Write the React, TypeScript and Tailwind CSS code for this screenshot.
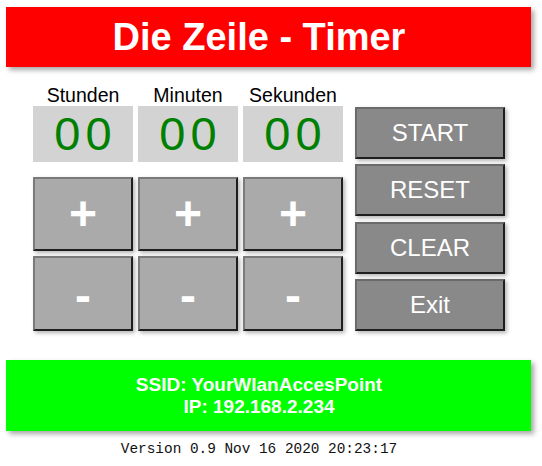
import React from 'react';

const units = ['Stunden', 'Minuten', 'Sekunden'];
const actions = ['START', 'RESET', 'CLEAR', 'Exit'];

export default function App() {
  return (
    <div className="w-[542px] h-[466px] bg-white pt-[7px] pl-[6px] pr-[11px] font-['Liberation_Sans',Arial,sans-serif]">
      {/* title bar */}
      <div className="h-[60px] bg-[#ff0000] flex items-center justify-center pr-[19px] shadow-[3px_3px_5px_rgba(0,0,0,0.35)]">
        <h1 className="text-white font-bold text-[38px] leading-none">Die Zeile - Timer</h1>
      </div>

      <div className="flex pl-[27px] mt-[17px]">
        {/* time + plus/minus */}
        <div className="grid grid-cols-[100px_100px_100px] gap-x-[5px]">
          {units.map((u) => (
            <div key={u} className="text-center text-black text-[19.5px] leading-[22px] h-[22px] whitespace-nowrap">
              {u}
            </div>
          ))}
          {units.map((u) => (
            <div
              key={u + '-v'}
              className="h-[56px] bg-[#d3d3d3] text-[#008000] text-[47px] leading-[56px] tracking-[5px] pl-[5px] text-center"
            >
              00
            </div>
          ))}
          {units.map((u) => (
            <button
              key={u + '-p'}
              className="mt-[15px] h-[74px] bg-[#aaaaaa] text-white font-bold text-[48px] leading-none border-2 border-t-[#7a7a7a] border-l-[#7a7a7a] border-r-[#1e1e1e] border-b-[#1e1e1e] shadow-[2px_2px_4px_rgba(0,0,0,0.3)]"
            >
              +
            </button>
          ))}
          {units.map((u) => (
            <button
              key={u + '-m'}
              className="mt-[5px] h-[75px] bg-[#aaaaaa] text-white font-bold text-[48px] leading-none pt-[4px] border-2 border-t-[#7a7a7a] border-l-[#7a7a7a] border-r-[#1e1e1e] border-b-[#1e1e1e] shadow-[2px_2px_4px_rgba(0,0,0,0.3)]"
            >
              -
            </button>
          ))}
        </div>

        {/* action buttons */}
        <div className="ml-[12px] mt-[23px] w-[150px] h-[224px] flex flex-col justify-between">
          {actions.map((a) => (
            <button
              key={a}
              className="h-[52px] bg-[#898989] text-white text-[24px] leading-none border-2 border-t-[#6a6a6a] border-l-[#6a6a6a] border-r-[#1e1e1e] border-b-[#1e1e1e] shadow-[2px_2px_4px_rgba(0,0,0,0.3)]"
            >
              {a}
            </button>
          ))}
        </div>
      </div>

      {/* wifi info */}
      <div className="mt-[29px] h-[71px] bg-[#00ff00] flex flex-col items-center justify-center pr-[19px] shadow-[3px_3px_5px_rgba(0,0,0,0.35)] text-white font-bold text-[19px] leading-[22px]">
        <div>SSID: YourWlanAccesPoint</div>
        <div>IP: 192.168.2.234</div>
      </div>

      <div className="mt-[9px] pr-[19px] text-center text-[#111] text-[14.4px] leading-[18px] font-['Liberation_Mono','Courier_New',monospace] whitespace-nowrap">
        Version 0.9 Nov 16 2020 20:23:17
      </div>
    </div>
  );
}
